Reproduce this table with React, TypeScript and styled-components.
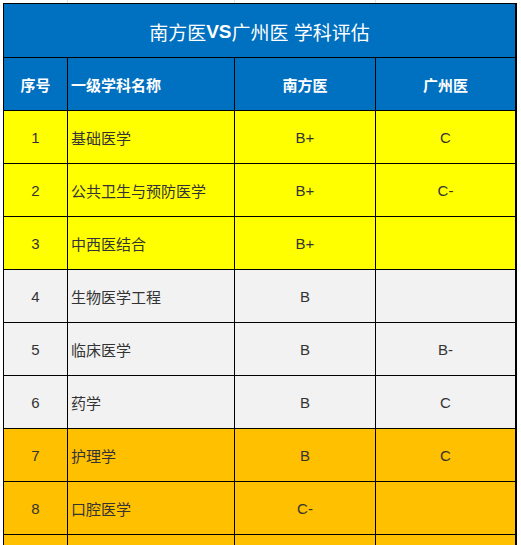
import styled, { createGlobalStyle } from "styled-components";

const GlobalStyle = createGlobalStyle`
  html, body {
    margin: 0;
    padding: 0;
    overflow: hidden;
    background: #ffffff;
  }
`;

type Tier = "yellow" | "gray" | "orange";

const tierColors: Record<Tier, string> = {
  yellow: "#ffff00",
  gray: "#f2f2f2",
  orange: "#ffc000",
};

const rows: { no: string; name: string; nf: string; gz: string; tier: Tier }[] = [
  { no: "1", name: "基础医学", nf: "B+", gz: "C", tier: "yellow" },
  { no: "2", name: "公共卫生与预防医学", nf: "B+", gz: "C-", tier: "yellow" },
  { no: "3", name: "中西医结合", nf: "B+", gz: "", tier: "yellow" },
  { no: "4", name: "生物医学工程", nf: "B", gz: "", tier: "gray" },
  { no: "5", name: "临床医学", nf: "B", gz: "B-", tier: "gray" },
  { no: "6", name: "药学", nf: "B", gz: "C", tier: "gray" },
  { no: "7", name: "护理学", nf: "B", gz: "C", tier: "orange" },
  { no: "8", name: "口腔医学", nf: "C-", gz: "", tier: "orange" },
  { no: "", name: "", nf: "", gz: "", tier: "orange" },
];

// Evaluation table
const App = () => {
  return (
    <>
      <GlobalStyle />
      <Sheet>
        <Table>
          <Title>
            南方医<Latin>VS</Latin>广州医 学科评估
          </Title>
          <HeadCell $align="center">序号</HeadCell>
          <HeadCell $align="left">一级学科名称</HeadCell>
          <HeadCell $align="center">南方医</HeadCell>
          <HeadCell $align="center">广州医</HeadCell>
          {rows.map((r, i) => (
            <Row key={i} $tier={r.tier}>
              <Cell $align="center">{r.no}</Cell>
              <Cell $align="left">{r.name}</Cell>
              <Cell $align="center">{r.nf}</Cell>
              <Cell $align="center">{r.gz}</Cell>
            </Row>
          ))}
        </Table>
      </Sheet>
    </>
  );
};

export default App;

const Sheet = styled.div`
  height: 545px;
  overflow: hidden;
  padding: 3px 0 0 3px;
  box-sizing: border-box;
  font-family: "Liberation Sans", "Noto Sans CJK SC", sans-serif;
  /* faint spreadsheet gridlines around the table */
  background-image:
    linear-gradient(#e1e1e1, #e1e1e1),
    linear-gradient(#e1e1e1, #e1e1e1),
    linear-gradient(#e1e1e1, #e1e1e1),
    repeating-linear-gradient(
      to bottom,
      transparent 0,
      transparent 56px,
      #e1e1e1 56px,
      #e1e1e1 57px
    );
  background-size: 1px 3px, 1px 3px, 1px 3px, 100% 53px;
  background-position: 67px 0, 234px 0, 375px 0, 0 0;
  background-repeat: no-repeat, no-repeat, no-repeat, repeat;
`;

const Table = styled.div`
  display: grid;
  grid-template-columns: 63px 166px 140px 139px;
  grid-template-rows: 53px 52px;
  grid-auto-rows: 52px;
  gap: 1px;
  width: 512px;
  background: #000;
  border: 1px solid #000;
  border-right: none;
  box-sizing: content-box;
  padding-right: 1px;
`;

const Title = styled.div`
  grid-column: 1 / -1;
  display: flex;
  align-items: center;
  justify-content: center;
  padding-top: 2px;
  background: #0070c0;
  color: #fff;
  font-size: 19px;
  font-weight: normal;
  white-space: pre;
`;

const Latin = styled.span`
  font-weight: bold;
`;

const HeadCell = styled.div<{ $align: "left" | "center" }>`
  display: flex;
  align-items: center;
  justify-content: ${(p) => (p.$align === "left" ? "flex-start" : "center")};
  padding-left: ${(p) => (p.$align === "left" ? "3px" : "0")};
  background: #0070c0;
  color: #fff;
  font-size: 15px;
  font-weight: bold;
`;

const Row = styled.div<{ $tier: Tier }>`
  display: contents;

  & > div {
    background: ${(p) => tierColors[p.$tier]};
  }
`;

const Cell = styled.div<{ $align: "left" | "center" }>`
  display: flex;
  align-items: center;
  justify-content: ${(p) => (p.$align === "left" ? "flex-start" : "center")};
  padding-left: ${(p) => (p.$align === "left" ? "3px" : "0")};
  color: #333;
  font-size: 15px;
  white-space: nowrap;
`;
